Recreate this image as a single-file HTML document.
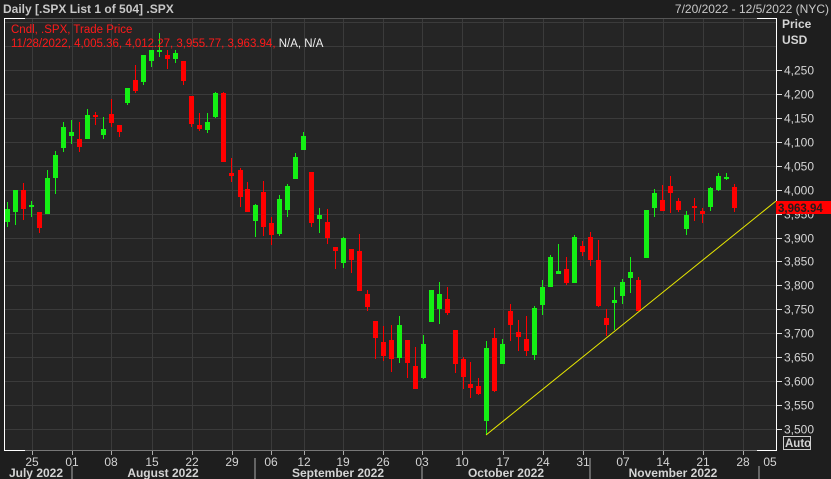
<!DOCTYPE html>
<html><head><meta charset="utf-8"><style>
html,body{margin:0;padding:0;background:#1e1e1e;width:831px;height:479px;overflow:hidden;font-family:"Liberation Sans",sans-serif}
svg{display:block}
</style></head><body>
<svg id="s" width="831" height="479" xmlns="http://www.w3.org/2000/svg" font-family="Liberation Sans, sans-serif">
<rect width="831" height="479" fill="#1e1e1e"/>
<rect x="5" y="18" width="771" height="433" fill="#252525"/>
<g id="grid" stroke="#3b3b3b" stroke-width="1"></g>
<line x1="5" y1="18.5" x2="776" y2="18.5" stroke="#555"/>
<line x1="5" y1="18.5" x2="25" y2="18.5" stroke="#fff"/>
<line x1="757" y1="18.5" x2="776" y2="18.5" stroke="#fff"/>
<line x1="4.5" y1="18" x2="4.5" y2="451" stroke="#fff"/>
<line x1="776.5" y1="18" x2="776.5" y2="451" stroke="#fff"/>
<line x1="5" y1="450.5" x2="776" y2="450.5" stroke="#777"/>
<line x1="5" y1="450.5" x2="25" y2="450.5" stroke="#fff"/>
<line x1="757" y1="450.5" x2="776" y2="450.5" stroke="#fff"/>
<g id="c"></g>
<line x1="486" y1="435" x2="776" y2="201" stroke="#e8e800" stroke-width="1"/>
<g id="ax" fill="#d4d4d4" font-size="12"></g>
<text x="3" y="13" fill="#c8c8c8" font-size="12" font-weight="bold">Daily [.SPX List 1 of 504] .SPX</text>
<text x="829" y="13" fill="#c8c8c8" font-size="12" text-anchor="end">7/20/2022 - 12/5/2022 (NYC)</text>
<text x="11" y="33" fill="#ff1a1a" font-size="11.5">Cndl, .SPX, Trade Price</text>
<text x="11" y="47" fill="#ff1a1a" font-size="11.5">11/28/2022, 4,005.36, 4,012.27, 3,955.77, 3,963.94, <tspan fill="#f0f0f0">N/A, N/A</tspan></text>
<text x="782" y="28" fill="#d4d4d4" font-size="12" font-weight="bold">Price</text>
<text x="782" y="44" fill="#d4d4d4" font-size="12" font-weight="bold">USD</text>
<rect x="776" y="201" width="55" height="13" fill="#ff0000"/>
<text x="778" y="212" fill="#1e1e1e" font-size="11.5" font-weight="bold">3,963.94</text>
<rect x="783.5" y="436.5" width="27" height="13" fill="none" stroke="#ccc"/>
<text x="785" y="447" fill="#d4d4d4" font-size="11.5" font-weight="bold">Auto</text>
<g fill="#d4d4d4" font-size="12" font-weight="bold" text-anchor="middle">
<text x="36" y="477">July 2022</text>
<text x="163" y="477">August 2022</text>
<text x="338" y="477">September 2022</text>
<text x="506" y="477">October 2022</text>
<text x="673" y="477">November 2022</text>
</g>
<g stroke="#aaa">
<line x1="72" y1="466" x2="72" y2="479"/><line x1="255" y1="458" x2="255" y2="479"/><line x1="422" y1="466" x2="422" y2="479"/><line x1="590" y1="458" x2="590" y2="479"/><line x1="759" y1="466" x2="759" y2="479"/>
</g>
</svg>
<script>
var NS="http://www.w3.org/2000/svg";
function el(p,t,a,txt){var e=document.createElementNS(NS,t);for(var k in a)e.setAttribute(k,a[k]);if(txt)e.textContent=txt;p.appendChild(e);return e;}
var g=document.getElementById('grid'),ax=document.getElementById('ax');
for(var i=-2;i<=16;i++){var y=Math.round(70+i*23.93)+0.5;if(y>18&&y<450)el(g,'line',{x1:5,y1:y,x2:776,y2:y});
 var p=4250-i*50;if(i>=0&&i<=15){el(ax,'line',{x1:777,y1:y,x2:782,y2:y,stroke:'#ddd'});el(ax,'text',{x:784,y:y+4},p.toLocaleString('en-US'));}}
var vx=[32,72,111,152,192,232,271,304,343,383,422,462,503,543,583,623,663,703,743];
var lab=['25','01','08','15','22','29','06','12','19','26','03','10','17','24','31','07','14','21','28'];
vx.forEach(function(x,i){el(g,'line',{x1:x+.5,y1:18,x2:x+.5,y2:450});el(ax,'line',{x1:x+.5,y1:451,x2:x+.5,y2:455,stroke:'#aaa'});el(ax,'text',{x:x,y:466,'text-anchor':'middle'},lab[i]);});
el(ax,'text',{x:770,y:466,'text-anchor':'middle'},'05');
var C=[[7,202,227,209,222,'g'],[15,190,225,190,212,'g'],[23,183,220,190,209,'r'],[31,201,217,205,207,'g'],[39,212,233,212,228,'r'],[47,170,214,178,214,'g'],[55,151,194,155,178,'g'],[63,122,152,127,148,'g'],[71,120,144,132,136,'g'],[79,122,152,139,147,'r'],[87,109,139,115,139,'g'],[95,112,125,115,117,'r'],[103,117,139,129,135,'g'],[111,99,127,114,123,'r'],[119,125,137,125,132,'r'],[127,88,105,88,103,'g'],[135,65,93,80,91,'r'],[143,55,85,55,82,'g'],[151,50,67,50,61,'g'],[159,33,57,50,51,'g'],[167,50,69,55,59,'r'],[175,50,63,53,59,'g'],[183,61,85,61,81,'r'],[191,96,127,96,124,'r'],[199,113,131,125,129,'r'],[207,113,133,122,130,'g'],[215,92,118,93,117,'g'],[223,92,162,93,162,'r'],[231,158,182,173,176,'r'],[240,168,207,170,197,'r'],[247,182,212,189,212,'r'],[255,204,237,205,221,'g'],[263,181,236,192,227,'r'],[271,217,245,223,235,'r'],[279,195,236,199,234,'g'],[287,184,217,186,210,'g'],[295,153,179,157,179,'g'],[303,132,150,136,150,'g'],[311,172,227,172,223,'r'],[319,208,233,215,219,'g'],[327,209,244,222,238,'r'],[335,247,269,247,251,'r'],[343,237,268,238,263,'g'],[351,249,273,249,260,'r'],[359,234,291,251,291,'r'],[367,290,311,294,307,'r'],[375,321,359,321,338,'r'],[383,326,361,342,356,'r'],[391,325,372,340,359,'r'],[399,316,363,325,358,'g'],[407,340,378,340,363,'r'],[415,347,389,366,389,'r'],[423,335,379,344,378,'g'],[431,290,322,290,322,'g'],[439,282,324,294,309,'g'],[447,287,315,299,313,'r'],[455,330,373,330,364,'r'],[463,357,389,359,377,'r'],[470,362,398,384,388,'r'],[478,378,395,386,394,'r'],[486,341,435,348,421,'g'],[494,328,392,338,391,'r'],[502,339,364,344,364,'g'],[510,304,341,311,325,'r'],[518,320,351,332,337,'r'],[526,316,356,339,351,'r'],[534,306,360,308,355,'g'],[542,280,315,287,305,'g'],[550,255,287,257,287,'g'],[558,244,274,271,274,'g'],[566,257,285,269,283,'r'],[574,235,283,237,283,'g'],[582,241,256,246,252,'r'],[590,232,266,237,260,'r'],[598,240,307,260,306,'r'],[606,309,336,318,325,'r'],[614,287,330,300,303,'g'],[622,279,304,282,296,'g'],[630,257,293,272,278,'g'],[638,277,311,280,311,'r'],[646,210,258,210,258,'g'],[654,189,217,193,208,'g'],[662,185,211,200,211,'r'],[670,176,213,186,193,'r'],[678,198,212,201,210,'r'],[686,211,235,215,229,'g'],[694,198,221,206,207,'r'],[702,208,223,211,214,'r'],[710,187,211,188,207,'g'],[718,173,191,176,190,'g'],[726,173,180,177,179,'g'],[734,184,212,187,208,'r']];
var cg=document.getElementById('c');
C.forEach(function(c){var col=c[5]=='g'?'#14f014':'#ff0000';
el(cg,'rect',{x:c[0],y:c[1],width:1,height:c[2]-c[1],fill:col});
el(cg,'rect',{x:c[0]-2,y:c[3],width:5,height:Math.max(2,c[4]-c[3]),fill:col});});
</script>
</body></html>
